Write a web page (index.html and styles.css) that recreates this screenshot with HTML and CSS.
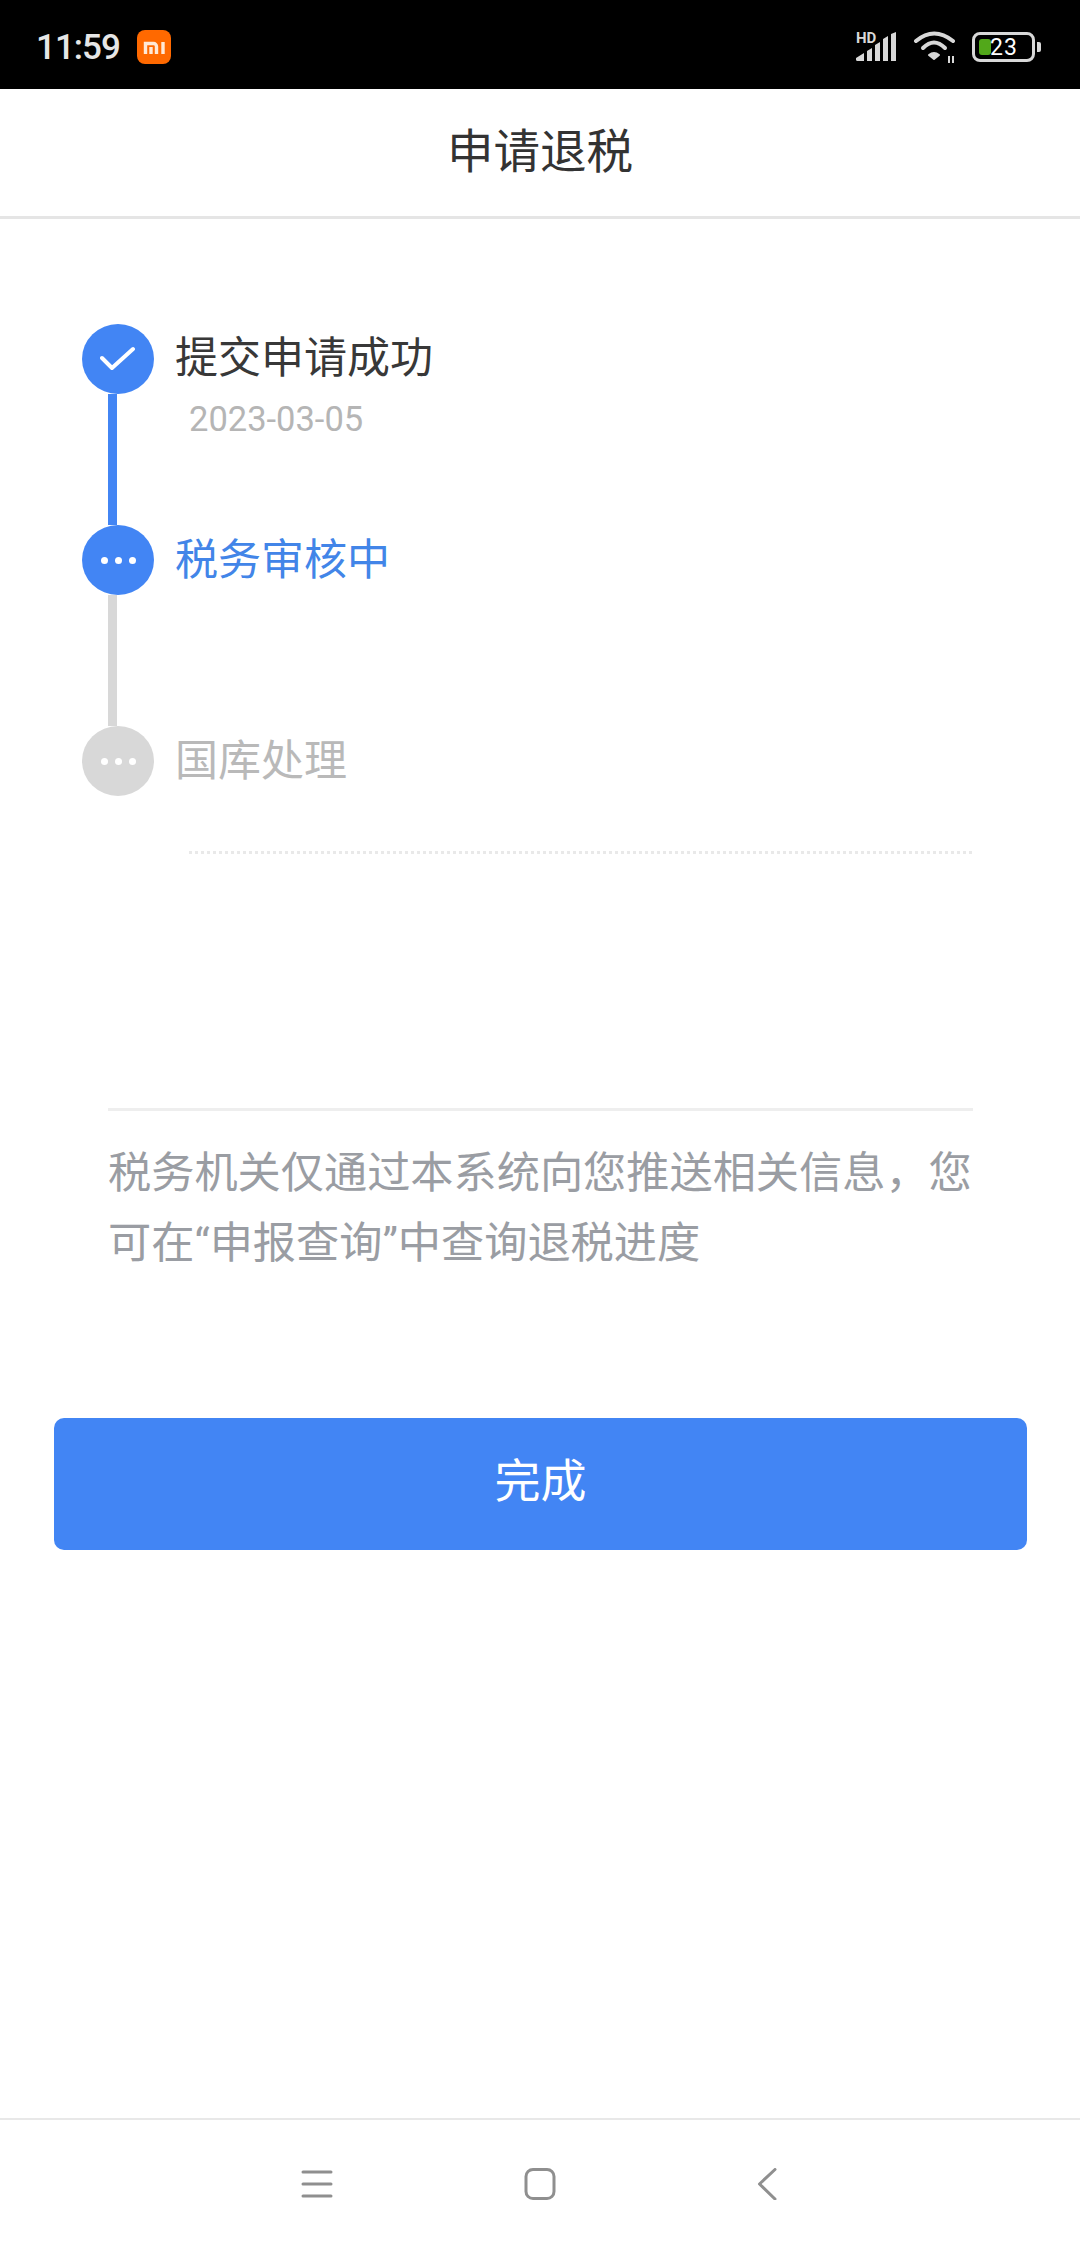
FILE: index.html
```html
<!DOCTYPE html>
<html lang="zh-CN">

<head>
  <meta charset="UTF-8">
  <meta name="viewport" content="width=device-width, initial-scale=1.0">
  <title>申请退税</title>
  <link rel="stylesheet" href="styles.css">
</head>

<body>
  <div class="status-bar">
    <span class="clock">11:59</span>
    <svg class="mi-badge" viewBox="0 0 34 34">
      <rect width="34" height="34" rx="8" fill="#ff6900" />
      <path d="M8.5 24V13.5h8a3 3 0 0 1 3 3V24M14 17v7M26 12v12" fill="none" stroke="#ffe9d6" stroke-width="3.4" />
    </svg>
    <div class="status-icons">
      <div class="signal">
        <span class="hd">HD</span>
        <svg viewBox="0 0 41 29">
          <path d="M0 26l8-5v8H2a2 2 0 0 1-2-3zM11 19l5-3v13h-5zM19 13l5-3v19h-5zM27 7l5-3v25h-5zM35 2l5-2v29h-5z" fill="#d8d8d8" />
        </svg>
      </div>
      <svg class="wifi" viewBox="0 0 44 32" fill="none" stroke="#d8d8d8" stroke-width="4" stroke-linecap="round">
        <path d="M3 10Q21 -5 40 10" />
        <path d="M10 17Q21 6 32 17" />
        <path d="M16 24Q21 20 26 24L21 28z" fill="#d8d8d8" stroke-width="2" stroke-linejoin="round" />
        <path d="M36 25v7M40 25v7" stroke-width="2" stroke-linecap="butt" />
      </svg>
      <div class="battery">
        <div class="battery-shell">
          <span class="battery-fill"></span>
          <span class="battery-level">23</span>
        </div>
        <span class="battery-tip"></span>
      </div>
    </div>
  </div>

  <header class="title-bar">申请退税</header>

  <main class="content">
    <ol class="steps">
      <li class="step step-done">
        <div class="step-rail">
          <span class="step-dot">
            <svg viewBox="0 0 36 26" class="check">
              <path d="M2 12l10 10L33 3" fill="none" stroke="#fff" stroke-width="4" stroke-linecap="round" stroke-linejoin="round" />
            </svg>
          </span>
          <span class="step-line"></span>
        </div>
        <div class="step-body">
          <div class="step-name">提交申请成功</div>
          <div class="step-date">2023-03-05</div>
        </div>
      </li>
      <li class="step step-active">
        <div class="step-rail">
          <span class="step-dot"><i></i><i></i><i></i></span>
          <span class="step-line"></span>
        </div>
        <div class="step-body">
          <div class="step-name">税务审核中</div>
        </div>
      </li>
      <li class="step step-todo">
        <div class="step-rail">
          <span class="step-dot"><i></i><i></i><i></i></span>
        </div>
        <div class="step-body">
          <div class="step-name">国库处理</div>
        </div>
      </li>
    </ol>

    <div class="dotted-rule"></div>

    <p class="notice">税务机关仅通过本系统向您推送相关信息，您可在“申报查询”中查询退税进度</p>

    <button class="done-btn">完成</button>
  </main>

  <nav class="nav-bar">
    <svg class="nav-icon" viewBox="0 0 32 32" fill="none" stroke="#8f8f8f" stroke-width="3" stroke-linecap="round">
      <path d="M2 4h28M2 16h28M2 28h28" />
    </svg>
    <svg class="nav-icon" viewBox="0 0 32 32" fill="none" stroke="#8f8f8f" stroke-width="3">
      <rect x="2" y="1.5" width="28" height="29" rx="7" />
    </svg>
    <svg class="nav-icon" viewBox="0 0 32 32" fill="none" stroke="#8f8f8f" stroke-width="3" stroke-linecap="round" stroke-linejoin="round">
      <path d="M28 1.5L12.5 16 28 31" />
    </svg>
  </nav>
</body>

</html>
```

FILE: styles.css
```css
* {
  box-sizing: border-box;
}

body {
  margin: 0;
  height: 2248px;
  display: flex;
  flex-direction: column;
  background: #fff;
  font-family: "Noto Sans CJK SC", "Noto Sans", sans-serif;
  color: #333;
}

.status-bar {
  flex: none;
  height: 89px;
  display: flex;
  align-items: center;
  padding: 5px 39px 0 36px;
  background: #000;
}

.clock {
  font-family: Roboto, sans-serif;
  font-weight: 500;
  font-size: 35px;
  letter-spacing: -1px;
  color: #e6e6e6;
}

.mi-badge {
  width: 34px;
  height: 34px;
  margin-left: 17px;
}

.status-icons {
  margin-left: auto;
  display: flex;
  align-items: center;
  gap: 15px;
}

.signal {
  display: grid;
  width: 42px;
  height: 30px;
}

.signal>* {
  grid-area: 1 / 1;
}

.signal svg {
  width: 41px;
  height: 29px;
}

.hd {
  font-family: Roboto, sans-serif;
  font-weight: 700;
  font-size: 15px;
  line-height: 12px;
  color: #d8d8d8;
}

.wifi {
  width: 44px;
  height: 32px;
}

.battery {
  display: flex;
  align-items: center;
  gap: 2px;
}

.battery-shell {
  width: 63px;
  height: 30px;
  padding: 4px;
  display: flex;
  align-items: stretch;
  position: relative;
  border: 3px solid #d8d8d8;
  border-radius: 8px;
}

.battery-fill {
  width: 12px;
  border-radius: 3px;
  background: #52a81a;
}

.battery-level {
  position: absolute;
  left: 15px;
  top: -2px;
  font-family: Roboto, sans-serif;
  font-size: 23px;
  line-height: 30px;
  letter-spacing: 1px;
  color: #fff;
}

.battery-tip {
  width: 4px;
  height: 10px;
  border-radius: 0 2px 2px 0;
  background: #d8d8d8;
}

.title-bar {
  flex: none;
  height: 130px;
  display: flex;
  align-items: center;
  justify-content: center;
  border-bottom: 3px solid #e5e5e5;
  font-size: 46.5px;
  padding-bottom: 10px;
  color: #333;
}

.content {
  flex: 1;
  padding-top: 105px;
}

.steps {
  list-style: none;
  margin: 0;
  padding: 0 0 0 82px;
}

.step {
  display: flex;
  height: 201px;
}

.step-todo {
  height: 72px;
}

.step-rail {
  width: 72px;
  display: flex;
  flex-direction: column;
  align-items: flex-start;
}

.step-dot {
  flex: none;
  width: 72px;
  height: 70px;
  border-radius: 50%;
  display: flex;
  align-items: center;
  justify-content: center;
  gap: 7px;
  background: #4285f4;
}

.step-dot i {
  width: 7px;
  height: 7px;
  border-radius: 50%;
  background: #fff;
}

.check {
  width: 36px;
  height: 26px;
}

.step-line {
  flex: 1;
  width: 9px;
  margin-left: 26px;
  background: #4285f4;
}

.step-active .step-line {
  background: #d8d8d8;
}

.step-todo .step-dot {
  background: #d8d8d8;
}

.step-body {
  margin-left: 21px;
}

.step-name {
  font-size: 43px;
  line-height: 60px;
  color: #383838;
}

.step-active .step-name {
  padding-top: 1px;
  color: #4285e8;
}

.step-todo .step-name {
  padding-top: 1px;
  color: #b9b9b9;
}

.step-date {
  font-family: Roboto, sans-serif;
  font-size: 34.5px;
  line-height: 50px;
  margin: 10px 0 0 14px;
  color: #b5b5b5;
}

.dotted-rule {
  height: 3px;
  margin: 53px 107px 0 189px;
  background: repeating-linear-gradient(to right, #e9e9e9 0 3px, transparent 3px 6px);
}

.notice {
  margin: 254px 107px 0 108px;
  padding-top: 28px;
  border-top: 3px solid #eee;
  font-family: Roboto, "Noto Sans CJK SC", sans-serif;
  font-size: 43.2px;
  line-height: 70px;
  color: #9a9da3;
}

.done-btn {
  display: block;
  width: 973px;
  height: 132px;
  margin: 139px 0 0 54px;
  padding: 0 0 14px;
  border: 0;
  border-radius: 10px;
  background: #4285f4;
  font-family: inherit;
  font-size: 46px;
  color: #fff;
}

.nav-bar {
  flex: none;
  height: 130px;
  display: flex;
  align-items: center;
  justify-content: center;
  gap: 191px;
  border-top: 2px solid #e8e8e8;
}

.nav-icon {
  width: 32px;
  height: 32px;
}
```
